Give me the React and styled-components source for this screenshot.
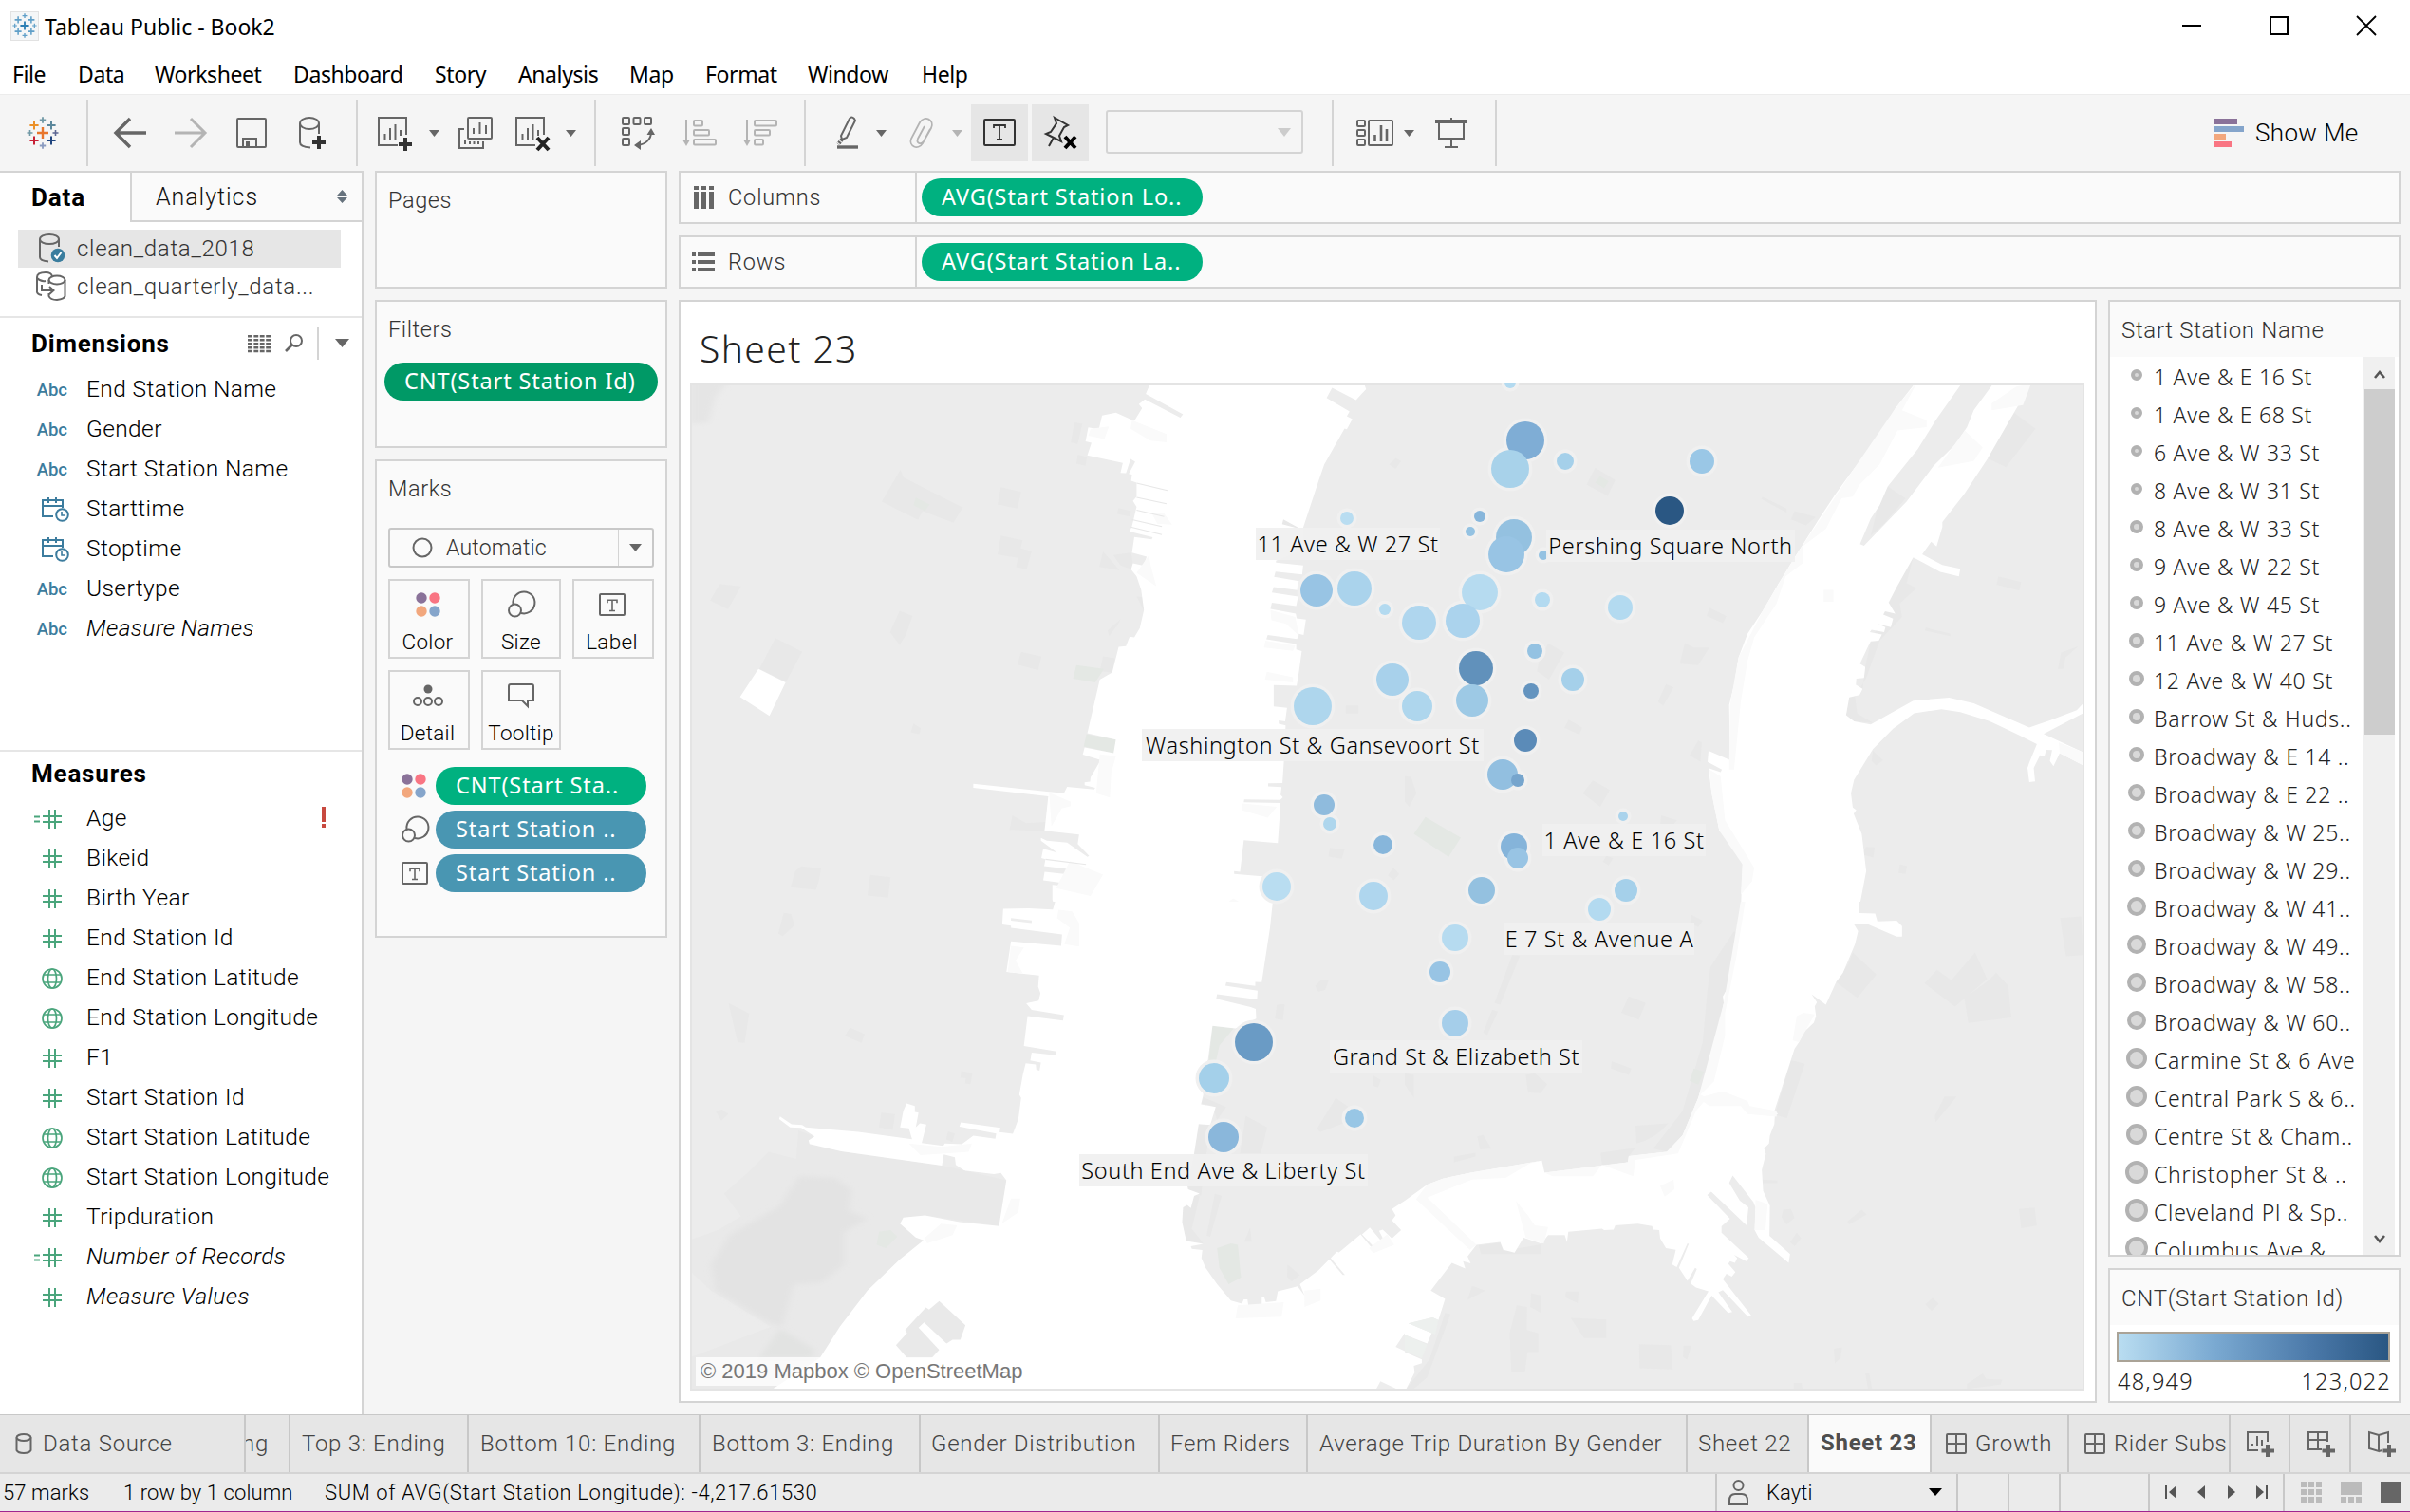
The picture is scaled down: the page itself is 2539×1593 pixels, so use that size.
import React from "react";
import styled, { createGlobalStyle, css } from "styled-components";

const ui = `Roboto, "Noto Sans", sans-serif`;
const humanist = `"Noto Sans", "Open Sans", sans-serif`;
const line = "#d4d4d4";
const ink = "#666";

const Global = createGlobalStyle`
  *, *::before, *::after { box-sizing: border-box; }
  html, body { margin: 0; padding: 0; overflow: hidden; }
  body { background: #f5f5f5; font-family: ${ui}; font-weight: 350; color: #000; }
  svg { display: block; flex: none; }
`;

/* ---------- frame ---------- */
const Window = styled.div`
  width: 2539px; height: 1593px; display: flex; flex-direction: column; overflow: hidden;
  background: #f5f5f5; white-space: nowrap; border-bottom: 1px solid #a0248f;
`;
const TitleBar = styled.header`
  height: 56px; flex: none; background: #fff; display: flex; align-items: center; padding: 0 36px 0 11px;
  font: 23px ${humanist}; letter-spacing: 0;
`;
const TitleIcon = styled.span`
  width: 30px; height: 31px; margin-right: 6px; margin-top: -2px; background: #f4f6f7; border: 1px solid #e2e2e2;
  display: flex; align-items: center; justify-content: center;
`;
const WindowButtons = styled.div`
  margin-left: auto; display: flex; align-items: center; gap: 72px; margin-top: -2px;
`;
const MenuBar = styled.nav`
  height: 43px; flex: none; background: #fff; display: flex; align-items: center; padding: 0 0 0 13px;
  font: 23px ${humanist}; letter-spacing: -0.4px;
`;
const MenuItem = styled.span`width: ${p => p.$w}px; flex: none;`;

/* ---------- toolbar ---------- */
const Toolbar = styled.div`
  height: 81px; flex: none; border-top: 1px solid #ececec; display: flex; align-items: center;
`;
const Tool = styled.span`
  width: ${p => p.$w}px; margin-left: ${p => p.$ml || 0}px; height: 60px; flex: none;
  display: flex; align-items: center; justify-content: center;
  background: ${p => (p.$on ? "#e6e6e6" : "transparent")};
`;
const ToolRule = styled.i`width: 2px; height: 70px; margin-left: ${p => p.$ml}px; flex: none; background: ${line};`;
const FitBox = styled.span`
  width: 208px; height: 46px; margin-left: 18px; border: 2px solid ${line}; border-radius: 3px; background: #f5f5f5;
  display: flex; align-items: center; justify-content: flex-end; padding-right: 11px; margin-top: -2px; flex: none;
`;
const ShowMe = styled.span`
  margin-left: 755px; display: flex; align-items: center; gap: 12px; font-size: 26px; letter-spacing: 0.35px;
`;

/* ---------- body ---------- */
const Body = styled.main`height: 1310px; flex: none; display: flex;`;
const Side = styled.aside`
  width: 383px; flex: none; background: #fff; border-right: 2px solid ${line}; display: flex; flex-direction: column;
`;
const SideTabs = styled.div`height: 54px; flex: none; display: flex; border-top: 2px solid ${line};`;
const SideTab = styled.div`
  display: flex; align-items: center; font-size: 25px;
  ${p => p.$on
    ? css`width: 137px; padding-left: 33px; font-weight: 700; font-size: 26px; letter-spacing: 0.9px;`
    : css`flex: 1; padding: 0 15px 0 25px; justify-content: space-between; background: #fafafa; border-left: 2px solid ${line}; border-bottom: 2px solid ${line}; color: #111; letter-spacing: .95px;`}
`;
const Sources = styled.div`padding: 8px 22px 0 19px; height: 99px; flex: none;`;
const Source = styled.div`
  height: 40px; display: flex; align-items: center; padding-left: 20px; gap: 12px; font-size: 24px;
  color: #333; background: ${p => (p.$on ? "#e6e6e6" : "none")}; letter-spacing: 0.7px;
`;
const Section = styled.section`height: ${p => p.$h}px; flex: none; border-top: 2px solid #e6e6e6; overflow: hidden;`;
const SectionHead = styled.div`
  height: ${p => p.$h}px; display: flex; align-items: center; padding: 0 13px ${p => p.$pb || 0}px 33px; font-size: 26px; font-weight: 700; letter-spacing: 0.8px;
`;
const HeadTools = styled.span`margin-left: auto; display: flex; align-items: center; gap: 15px;`;
const HeadRule = styled.i`width: 2px; height: 35px; background: ${line}; margin-right: 2px;`;
const Field = styled.div`
  height: 42px; display: flex; align-items: center; font-size: 24.5px; letter-spacing: 0.4px;
  font-style: ${p => (p.$it ? "italic" : "normal")};
`;
const FieldIcon = styled.span`
  width: 91px; flex: none; display: flex; justify-content: flex-end; padding-right: ${p => p.$pr}px; margin-top: 3px;
  font: 500 18.5px ${ui}; color: #3c7c9e; letter-spacing: 0;
`;
const Alert = styled.b`margin-left: auto; margin-right: 38px; width: 4px; display: flex; flex-direction: column; gap: 2px;
  &::before { content: ""; height: 16px; background: #c8493f; }
  &::after { content: ""; height: 4px; background: #c8493f; }
`;

const Cards = styled.div`width: 308px; margin-left: 12px; flex: none; display: flex; flex-direction: column; gap: 12px;`;
const Card = styled.div`
  height: ${p => p.$h}px; flex: none; border: 2px solid ${line}; background: #fafafa; overflow: hidden;
`;
const CardTitle = styled.div`
  font-size: 23.5px; line-height: 28px; padding: 15px 12px 0; color: #333; letter-spacing: 0.6px;
`;
const FilterSlot = styled.div`padding: 21px 0 0 8px;`;
const Pill = styled.div`
  width: ${p => p.$w}px; height: 40px; border-radius: 20px; background: ${p => p.$c}; color: #fff;
  font: 400 23.5px/39px ${humanist}; padding-left: 21px; flex: none; letter-spacing: 0.88px;
`;
const MarkType = styled.div`
  margin: 27px 12px 0; height: 42px; border: 2px solid #c8c8c8; border-radius: 3px; background: #fafafa; color: #333;
  display: flex; align-items: center; font-size: 23px; padding-left: 23px; gap: 14px; letter-spacing: 0.2px;
`;
const MarkCaret = styled.span`
  margin-left: auto; width: 36px; height: 38px; border-left: 1px solid ${line}; display: flex; align-items: center; justify-content: center;
`;
const MarkGrid = styled.div`
  margin: 12px 12px 0; display: grid; grid-template-columns: 86px 84px 86px; column-gap: 12px; row-gap: 12px;
`;
const MarkButton = styled.div`
  height: 84px; border: 2px solid ${line}; display: flex; flex-direction: column; align-items: center; font-size: 22.5px; line-height: 28px;
  padding-right: ${p => p.$pr || 0}px; letter-spacing: 0.3px;
`;
const MarkGlyph = styled.span`height: 50px; display: flex; align-items: center; justify-content: center;`;
const MarkRow = styled.div`
  display: flex; align-items: center; height: 46px; padding-left: 26px;
  > span { width: 36px; }
`;
const MarkRows = styled.div`margin-top: 15px;`;

const Right = styled.div`width: 1814px; margin-left: 12px; display: flex; flex-direction: column; gap: 12px;`;
const Shelf = styled.div`height: 56px; flex: none; border: 2px solid ${line}; background: #fafafa; display: flex; align-items: center;`;
const ShelfName = styled.div`
  width: 249px; height: 52px; border-right: 2px solid ${line}; margin-right: 5px; padding-left: ${p => p.$pl}px; display: flex;
  align-items: center; gap: ${p => p.$gap}px; font-size: 23.5px; color: #333; letter-spacing: 0.85px;
`;
const Stage = styled.div`display: flex; gap: 12px;`;
const View = styled.div`
  width: 1494px; height: 1162px; border: 2px solid ${line}; background: #fff; padding: 0 11px 11px 10px;
`;
const SheetTitle = styled.h1`
  margin: 0; height: 86px; padding: 8px 0 0 10px; font: 300 39px/82px ${humanist}; color: #222; letter-spacing: 1.4px;
`;
const MapCanvas = styled.div`position: relative; width: 1469px; height: 1061px; background: #ececec; overflow: hidden;`;
const MapLabel = styled.span`
  position: absolute; left: ${p => p.$x - 727}px; top: ${p => p.$y - 404}px; width: ${p => p.$w}px; height: 34px; text-align: center;
  font: 300 23.5px/34px ${humanist}; color: #000; background: rgba(240,240,240,.93); letter-spacing: 0.62px;
`;
const Credit = styled.span`
  position: absolute; left: 6px; bottom: 5px; height: 30px; padding: 0 4px 0 5px; background: rgba(255,255,255,.75);
  font: 22px/30px "Liberation Sans", Arial, sans-serif; color: #777;
`;
const Legends = styled.div`width: 308px; display: flex; flex-direction: column; gap: 12px;`;
const Legend = styled.div`height: ${p => p.$h}px; border: 2px solid ${line}; background: #fff; overflow: hidden;`;
const LegendHead = styled.div`
  height: 58px; background: #fafafa; padding-left: 12px; font-size: 24px; line-height: 60px; color: #333; letter-spacing: 0.7px;
`;
const LegendBody = styled.div`display: flex; height: 946px;`;
const LegendList = styled.div`flex: 1; overflow: hidden; padding-top: 1px;`;
const LegendRow = styled.div`
  height: 40.03px; display: flex; align-items: center; font: 300 23px ${humanist}; color: #222; letter-spacing: 0.72px;
`;
const Dot = styled.i`
  width: ${p => p.$r * 2}px; height: ${p => p.$r * 2}px; margin-left: ${p => 28 - p.$r}px; margin-right: ${p => 18 - p.$r}px; margin-top: -4px;
  border-radius: 50%; background: #d9d9d9; border: 4px solid #b2b2b2; flex: none;
`;
const Scroll = styled.div`
  width: 33px; margin-right: 4px; background: #f0f0f0; display: flex; flex-direction: column; align-items: center; flex: none;
  svg:last-child { margin-top: auto; }
`;
const Thumb = styled.i`width: 32px; height: 364px; background: #cdcdcd;`;
const Ramp = styled.div`
  margin: 7px 9px 0 7px; height: 32px; border: 2px solid #aaa397;
  background: linear-gradient(90deg, #b9ddf1, #7baad2 35%, #4a78a8 72%, #2a5783);
`;
const RampEnds = styled.div`
  display: flex; justify-content: space-between; padding: 0 8px 0 8px; font: 300 23.5px/41px ${humanist}; color: #222; letter-spacing: 1.25px;
`;

/* ---------- bottom ---------- */
const SheetTabs = styled.div`
  height: 61px; flex: none; background: #e6e6e6; border-top: 1px solid #c8c8c8; display: flex; font-size: 24px; color: #444;
`;
const SheetTab = styled.div`
  width: ${p => p.$w}px; flex: none; border-right: 2px solid #c8c8c8; padding-left: ${p => p.$pl ?? 12}px; display: flex; align-items: center;
  gap: ${p => p.$gap ?? 10}px; overflow: hidden; letter-spacing: ${p => p.$ls ?? 0.73}px; height: 60px;
  ${p => p.$on && css`background: #fafafa; font-weight: 700; color: #4e4e4e; padding-bottom: 3px;`}
  ${p => p.$end && css`justify-content: flex-end; padding-right: 21px; padding-left: 0;`}
  ${p => p.$mid && css`justify-content: center; padding-left: 2px;`}
`;
const Status = styled.footer`
  height: 42px; flex: none; border-top: 2px solid ${line}; background: #ebebeb; display: flex; align-items: center; font-size: 22px;
`;
const StatusCell = styled.div`
  width: ${p => p.$w}px; height: 40px; flex: none; padding: 0 ${p => p.$pr || 0}px 2px ${p => p.$pl || 0}px; display: flex; align-items: center;
  border-right: ${p => (p.$rule ? 2 : 0)}px solid #c8c8c8; gap: ${p => p.$gap || 0}px; letter-spacing: ${p => p.$ls ?? 0.1}px;
`;
const Push = styled.span`margin-left: auto;`;

/* ---------- icons ---------- */
const Svg = ({ w, h, children, s = ink, sw = 2 }) => (
  <svg width={w} height={h} viewBox={`0 0 ${w} ${h}`} fill="none" stroke={s} strokeWidth={sw} overflow="visible">{children}</svg>
);
const Caret = ({ c = ink, w = 12, h = 8 }) => (
  <Svg w={w} h={h} s="none"><path d={`M0 0H${w}L${w / 2} ${h}Z`} fill={c} /></Svg>
);
const plus = (x, y, r) => `M${x - r} ${y}H${x + r}M${x} ${y - r}V${y + r}`;
const Logo = ({ size = 34, mono }) => {
  const parts = [
    [17, 17, 6, "#e8762c", 2.4], [8, 9, 4.6, "#eb9129", 2], [26, 9, 4.6, "#5b879b", 2], [8, 25, 4.6, "#c72035", 2],
    [26, 25, 4.6, "#1f447e", 2], [17, 3.5, 3.2, "#7199a6", 1.8], [17, 30.5, 3.2, "#8a9bc0", 1.8], [3.5, 17, 3, "#7199a6", 1.6], [30.5, 17, 3, "#5c6692", 1.6],
  ];
  return (
    <svg width={size} height={size} viewBox="0 0 34 34" fill="none">
      {parts.map(([x, y, r, c, w], i) => <path key={i} d={plus(x, y, r)} stroke={mono ? (i === 0 ? "#2d7fb4" : "#5f9fc8") : c} strokeWidth={w} />)}
    </svg>
  );
};
const Sheet = ({ mark }) => (
  <Svg w={38} h={38}>
    <path d="M22 32H2V3H31V21" /><path d="M8.500 27V20M14 27V14M19.500 27V10M25 22V16" />
    {mark === "plus" ? <path d="M30 24V38M23 31H37" stroke="#333" strokeWidth="4" /> : <path d="M24 24L36 37M36 24L24 37" stroke="#222" strokeWidth="4" />}
  </Svg>
);
const SortIcon = ({ desc }) => (
  <Svg w={36} h={30} s="#b4b4b4">
    <path d="M4 1V26" /><path d="M0 22H8L4 29Z" fill="#b4b4b4" stroke="none" />
    {desc
      ? <><rect x="12" y="2" width="23" height="5.500" rx="1" /><rect x="12" y="12" width="16" height="5.500" rx="1" /><rect x="12" y="22" width="9" height="5.500" rx="1" /></>
      : <><rect x="12" y="2" width="9" height="5.500" rx="1" /><rect x="12" y="12" width="16" height="5.500" rx="1" /><rect x="12" y="22" width="23" height="5.500" rx="1" /></>}
  </Svg>
);
const BoxT = ({ w = 28 }) => (
  <Svg w={w} h={w - 4}>
    <rect x="1" y="1" width={w - 2} height={w - 6} rx="1" />
    <path d={`M${w / 2 - 5} ${w * .26 + 3}V${w * .26}H${w / 2 + 5}V${w * .26 + 3}M${w / 2} ${w * .26}V${w * .66}M${w / 2 - 3} ${w * .66}H${w / 2 + 3}`} strokeWidth="1.600" />
  </Svg>
);
const Four = () => (
  <Svg w={26} h={26} s="none">
    <circle cx="6" cy="6" r="5.700" fill="#8a7299" /><circle cx="20" cy="6" r="5.700" fill="#f97583" />
    <circle cx="6" cy="20" r="5.700" fill="#f2a77d" /><circle cx="20" cy="20" r="5.700" fill="#85a5cb" />
  </Svg>
);
const SizeIcon = () => (
  <Svg w={28} h={28}><path d="M5.500 13A11.500 11.500 0 1 1 14 23" /><circle cx="7.500" cy="20" r="6.500" /></Svg>
);
const Hash = ({ eq }) => (
  <Svg w={eq ? 29 : 20} h={20} s="#4aa57c">
    <g transform={`translate(${eq ? 9 : 0} 0)`}><path d="M0 7H20M0 13H20M7 0V20M13 0V20" /></g>
    {eq && <path d="M0 7.500H6M0 12.500H6" />}
  </Svg>
);
const Globe = () => (
  <Svg w={22} h={22} s="#4aa57c" sw={1.7}>
    <circle cx="11" cy="11" r="10" /><ellipse cx="11" cy="11" rx="4.500" ry="10" /><path d="M2 7H20M2 15H20" />
  </Svg>
);
const Calendar = () => (
  <Svg w={29} h={26} s="#3c7c9e">
    <path d="M12 20H1V3H22V11M1 9H22M7 0V6M15 0V6" /><circle cx="21.500" cy="18.500" r="6.300" /><path d="M21 15V19H25" strokeWidth="1.600" />
  </Svg>
);
const GridIcon = () => <Svg w={22} h={22}><rect x="1" y="1" width="20" height="20" rx="1" /><path d="M11 1V21M1 11H21" /></Svg>;

/* ---------- map ---------- */
const water = {
  nw: "M1018 0L1005 42L1086 102L1080 112L1003 58L990 72L997 84L980 122L940 97L910 106L903 146L880 141L874 182L887 186L878 223L955 246L950 275L962 276L972 234L982 242L968 278L975 280L973 298L985 304L985 345L977 358L985 375L975 432L970 448L1020 465L1018 471L980 464L975 510L1007 522L1000 549L977 542L973 560L985 580L995 620L1001 680L992 733L980 760L970 758L962 786L946 788L932 864L905 885L878 1043L940 1062L935 1102L872 1085L868 1106L907 1122L885 1173L884 1186L872 1188L872 1196L895 1204L893 1209L834 1201L827 1220L790 1215L630 1192L630 1204L793 1229L785 1331L860 1342L857 1370L882 1405L878 1408L834 1366L790 1360L777 1352L777 1360L812 1395L782 1384L778 1411L787 1415L784 1435L895 1453L893 1468L785 1452L782 1477L880 1495L878 1500L802 1490L802 1535L808 1555L805 1568H1280L1281 1545L1258 1465L1197 1458V1450L1210 1452L1218 1359L1292 1367L1298 1249L1218 1247L1219 1238L1297 1240L1303 1232L1298 1225L1300 1202L1271 1200V1191L1302 1190L1305 1130L1309 1020L1294 1015V1005L1308 1008L1312 968L1283 964V901L1333 903L1338 860L1344 801L1332 796V780L1267 766L1270 753L1334 765L1337 750L1348 753L1353 708L1333 704L1331 690L1276 676L1279 658L1332 668L1336 640L1279 628L1283 612L1335 621L1338 594L1284 582L1287 566L1345 575L1347 548L1288 540V534L1347 500L1347 437L1381 297L1393 250L1437 144L1442 146L1454 116L1442 108L1448 94L1398 54L1410 24L1462 60L1474 42L1484 28L1476 0ZM163 853L222 893L187 992L123 936Z",
  sw: "M808 0L803 24L750 20L695 22L693 70L712 73V80L823 100L821 135L712 121L702 215L773 226L771 260L776 280L772 303L745 311L757 331L827 347L825 364L748 350L740 441L811 458L809 470L757 462L754 486L777 492L774 517L767 514L766 498L744 494L738 528L730 590L734 600L728 665L722 688L716 710L687 705L689 692L603 675L600 688L680 709L678 725L630 716L605 742L568 740L565 747L518 738L528 682L514 678L505 690L511 645L503 643V625L485 617L478 640L471 690L490 693L497 727L380 704L266 690L258 683L235 681L210 657L208 665L232 690L256 692L285 718L272 730L274 741L343 764L562 807L566 773L590 782L592 805L610 822L675 833L690 830L702 852L686 992L600 980L525 960L478 966L471 985L505 1027L522 1036L470 1095L400 1190L340 1300L297 1395L190 1495H1568V915L1540 940L1548 960L1540 975L1560 1005L1540 1030L1520 1003L1512 1007L1524 1040L1519 1042L1492 997L1475 1018L1505 1062L1500 1066L1472 1018L1425 1073L1420 1071L1407 1090L1438 1142L1433 1142L1404 1094L1380 1128L1340 1170L1350 1205L1335 1177L1292 1192L1288 1222L1266 1225L1262 1208H1257V1235L1228 1237L1226 1217H1218L1214 1230L1190 1220L1160 1170L1135 1120L1126 1090L1128 1066L1105 1062L1103 1054L1130 1047L1093 1038L1084 980L1086 935L1095 928L1103 937L1110 900L1122 893L1097 880L1095 870L1110 770L1120 680L1145 683L1157 628L1125 620L1130 590L1125 520L1140 485L1150 380L1200 388L1245 358L1244 328L1233 322L1158 297L1160 283L1247 299L1248 272L1178 257L1180 246L1243 258V245L1257 246L1275 80L1281 0Z",
  ne: "M1145 0L1095 85L1050 190L1005 258L960 340L925 410L870 525L835 600L800 680L765 750L745 820L735 900L724 960L726 1122L678 1095L676 1128L708 1150L705 1158L678 1146L685 1220L702 1330L745 1390L754 1430L750 1568H1013L1030 1450L1020 1340L1002 1280L1008 1270L1000 1262L996 1220L1003 1180L1045 1090L1090 1030L1137 984L1198 972L1240 981L1305 1007L1370 1048L1411 1075L1394 1130L1390 1145L1394 1187L1407 1185L1404 1145L1418 1108L1428 1110L1432 1092L1445 1093L1440 1125L1448 1140L1462 1102L1513 1137V1098L1426 1045L1513 985V957L1500 975L1440 1005L1394 1026L1270 955L1215 938L1135 947L1040 1017L1003 1008L985 990L992 937L1015 930L1022 912L1007 900L1008 882L1025 880L1028 848L1016 838L1035 785L1040 772L1058 770L1065 752L1038 745L1042 738L1070 745L1073 730L1055 720L1085 730L1090 705L1068 693L1072 683L1095 690L1080 657L1098 612L1135 524L1195 567L1237 580L1240 558L1200 547L1155 515L1175 478L1187 492L1200 435V420L1250 335L1300 235L1350 120L1403 0H1320L1270 90L1255 140L1230 190L1180 255L1120 360L1025 490L1016 485L1040 410L1060 370L1078 315L1145 205L1185 120L1249 0Z",
  se: "M750 0L745 100L718 270L710 290L712 310L700 390L690 450L655 600L620 715L585 765L500 778L498 797L312 829L306 792L150 828L85 847L50 865L0 915V1325L50 1352L60 1320L8 1290L62 1272L75 1280L90 1215L58 1190L105 1105L135 1122L130 1100L147 1106L140 1085L160 1050L213 1041L220 1065L245 1074L265 1028L305 1046L320 1020H357L362 1042L365 1010L440 1000L445 1005L466 1003L470 990L520 985L552 992L555 1003L568 1005L570 1030L583 1060L605 1065L597 1110L607 1118L631 1045L634 1047L612 1120L631 1160L648 1120L652 1124L638 1168L650 1180L678 1192L641 1275L645 1283L655 1280L685 1205L722 1258L731 1255L700 1195L710 1188L766 1270L773 1265L710 1155L718 1138L730 1147L738 1133L722 1108L726 1100L737 1105L742 1090L735 1080L762 1100L768 1090L707 1013V993L726 970L675 897L684 887L763 990L767 935L748 915L724 860L732 838L778 918L783 935L781 1005L790 1028L857 1105L860 1078L814 1022L815 930L800 885L797 820L806 772L802 755L813 740L815 715L825 680L826 655L833 648L825 640L870 450L880 430L890 400L913 370L918 350L915 320L920 308L908 283L940 315L963 245L978 218L1005 130L1012 90L1003 70L1035 70L1098 107H1110V75L1098 58L1055 60L1050 36L1015 35V0ZM0 1378L38 1400V1412L20 1420L22 1440L3 1490H0Z",
};
const parks = {
  nw: "M472 265L478 288L607 377L587 422L520 388L510 414L431 360ZM690 317L734 331L726 380L683 368ZM690 460L737 474L733 498L757 506L746 559L723 553L727 526L683 516ZM79 603L125 610L97 677L58 652ZM470 682L498 697L484 752L470 783L449 745ZM200 762L258 803L223 892L165 853ZM734 803L778 817L771 857L726 841ZM850 126L867 130L857 190L842 185ZM857 221L877 228L874 254L854 248ZM912 507L948 562L904 552ZM934 517L973 510L977 542L975 560L950 548ZM950 707L945 722L925 757L922 740ZM912 816L938 822L932 864L905 860ZM500 1014L516 1028L513 1046L494 1040ZM715 1285L745 1308L787 1305L784 1332L709 1328ZM256 1436L299 1442L295 1475L288 1505L233 1497L243 1450ZM406 1461L450 1468L445 1528L400 1522ZM1440 961H1467V985H1440ZM1405 1381L1437 1387L1431 1413L1402 1407ZM1543 1440L1556 1458L1544 1477L1531 1462ZM1548 232L1560 240L1548 263L1534 250ZM945 379L973 388L970 404L943 396ZM985 640L1000 642V680Z",
  sw: "M218 34L234 38L242 72L216 105L206 98ZM98 310L143 342L133 432L118 430L112 395ZM362 385L394 405L387 432L351 410ZM604 518L628 524L624 558L612 556L614 540L602 538ZM430 645L460 650L455 698L425 690ZM70 640L84 636L98 650L82 670ZM1290 315L1307 313L1303 362L1286 358ZM1385 240L1403 238L1395 270L1380 275L1373 258ZM1418 600L1458 640L1440 675L1384 705L1377 695ZM1222 655L1269 690L1255 770H1210ZM1500 532L1516 545L1510 568L1498 563ZM1155 893L1170 900L1145 1025L1137 1022ZM1313 1110L1340 1142L1322 1162L1312 1148ZM1232 997L1235 1040L1219 1040ZM575 703L590 710L584 735L571 727ZM1130 598L1180 628L1160 668L1150 625L1125 617ZM1120 680L1145 683L1125 900L1097 880ZM1100 890L1122 900L1105 1000L1130 1045L1093 1038L1084 980L1086 935Z",
  ne: "M425 260L470 296L453 343L406 310ZM320 778L356 805L322 885L295 860L300 830ZM680 673L718 697L710 718L674 697ZM625 777L645 790L680 790L655 842L614 838ZM583 898L600 908L577 962L565 950ZM366 1003L396 1026L390 1047L356 1027ZM420 1182L458 1210L436 1260L397 1220ZM655 1065L663 1070L660 1127L636 1108ZM798 345L852 380V392L796 352ZM870 388L918 405L895 430L862 412ZM1360 97L1408 145L1342 258L1300 232ZM1325 580L1376 597L1372 622L1321 605ZM1163 731L1218 750V757L1161 740ZM1465 805L1503 787L1475 820L1470 853H1458ZM1045 1095L1068 1123L1052 1138L1042 1125ZM1105 1430L1121 1434L1118 1458L1102 1455ZM1030 1378L1049 1380L1046 1410L1020 1400ZM1078 315L1118 350L1070 425L1040 460L1055 380ZM572 1285L608 1300L600 1312H570ZM450 1405L465 1412L455 1433L442 1422ZM1135 524L1120 600L1142 615L1105 660L1110 700L1060 770L1030 880L1005 935L1010 985L1045 1012L1003 1008L985 990L992 937L1022 912L1028 848L1040 772L1098 612ZM0 1170L14 1172L26 1220L10 1260L0 1245Z",
  se: "M500 290L538 310L522 361L483 340ZM462 488L506 510L500 530L460 510ZM175 713L193 755L168 758L162 718ZM110 780L158 768V780L110 797ZM437 768L515 753L500 778V797L440 805ZM515 685L588 678Q560 725 517 740ZM240 163L257 165L213 315L200 310ZM195 330L208 336L184 408L175 400ZM1273 155L1300 237L1228 321L1160 250L1188 208L1220 240ZM1320 217L1347 257L1354 354L1258 371L1249 295L1304 240ZM1463 50L1510 45L1514 163L1476 167ZM1000 155L1053 223L1010 294L962 245L990 190ZM862 485L893 496L853 662L826 652ZM1205 596H1232L1185 675L1183 655ZM1371 940L1406 936L1411 991L1376 999ZM845 942L862 940L870 968L852 987L841 965ZM1020 942L1031 957L992 987L988 978ZM875 1012L885 1030L870 1054L860 1042ZM1178 1212L1192 1230L1176 1252L1162 1232ZM250 1235L273 1240L272 1310L298 1320V1378H274L268 1440H238L234 1320ZM282 1198L303 1204V1257L280 1240ZM360 1193H388L386 1228L358 1210ZM370 1273L450 1278V1335H400ZM523 1354L594 1357L598 1431L524 1427ZM622 1358H640L630 1402L621 1392ZM958 1368L976 1363L973 1395L960 1413ZM1290 1443L1298 1460L1334 1462L1330 1477L1255 1490V1475ZM1028 1443H1037L1043 1490H1034ZM868 1472H886L888 1490H868ZM150 1175L180 1190L140 1218ZM90 1258L102 1262L50 1455L20 1490H3L55 1400ZM270 530L290 525L318 558L303 586L275 584ZM0 525L20 530V600L0 560ZM640 40L665 58L655 78L637 65ZM797 850L832 853V861H797ZM735 90L745 100L718 270L700 390L655 600L620 715L585 765L555 755L620 640L665 430L675 280L682 200ZM165 1052L213 1043L220 1068L305 1048V1078H170Z",
};
const greens = {
  nw: "M505 348L535 368L525 388L500 370ZM854 842L914 853L895 893L847 882ZM876 1046L940 1062L935 1102L870 1082Z",
  sw: "M1150 380L1196 388L1165 440L1158 485H1142ZM425 1010L450 1005L465 1025L440 1060L420 1050ZM1160 1060L1190 1045L1205 1050L1212 1150L1185 1170L1165 1120Z",
  ne: "M436 284L455 300L445 320L425 304ZM46 1290L125 1351L98 1408L20 1340Z",
  se: "M645 510L668 520L655 560L636 548Z",
};
const shoal = {
  nw: "M975 120L1050 160V185L1015 180L972 145ZM885 145L925 138L915 175L880 165ZM1018 395L1045 395L1062 428L1030 425ZM1012 518L1016 550L1028 610L985 570ZM1276 680L1330 700L1338 755L1310 720L1278 710ZM1265 770L1330 785L1325 800L1262 790ZM1268 862L1325 878V893L1264 885ZM905 1105L940 1110L930 1160L927 1233L897 1220ZM795 1218L842 1245V1258L822 1265L800 1318ZM1215 1250L1290 1260L1270 1292L1213 1270ZM840 1420L912 1460L885 1523L810 1500ZM1180 1545L1195 1530L1220 1550V1568H1180Z",
  sw: "M815 25L845 30L860 65V137L828 130L840 80L812 50ZM712 135L740 140L722 180L738 220L705 215ZM490 740L560 750L627 740L620 765L515 775ZM712 908H732L728 950L692 985ZM523 1030L560 985L595 990L585 1020L530 1045ZM1205 1235L1305 1225L1300 1270L1200 1275ZM1350 1190L1385 1185V1220L1350 1240ZM1530 1018L1545 1050L1500 1075L1490 1060Z",
  ne: "M1145 5L1110 90L1165 120V140L1100 150L1060 250L1015 310L1000 345L975 350L940 440L890 490V540L850 580L830 660L780 760L765 830L750 950L735 1150H724L726 960L745 820L800 680L870 525L1005 258L1095 85ZM1310 70L1365 20L1398 12L1380 75L1310 90ZM1250 150L1290 200L1270 240L1190 260ZM935 620H957V655H935ZM680 1150L705 1170L715 1300L780 1440L775 1480L750 1520L754 1430L702 1330L685 1220ZM1460 1070L1513 1098V1137L1462 1102Z",
  se: "M750 0H760L740 170L715 340V410L690 550L660 590L675 600L650 640L610 770L515 790L510 840L440 805L420 840H330L312 829L498 797L500 778L585 765L620 715L655 600L712 310ZM655 600L710 580L765 610L770 625L830 640V658L765 650L750 625L680 625ZM150 828L220 812L306 792L280 800L225 845H220L150 850L50 905L160 1050L145 1065L25 910L50 865L85 847ZM248 915L275 960L290 990L320 995L310 1046L270 1028ZM570 870L600 850L602 880L580 902ZM875 350L890 340L915 345L880 430L866 425ZM783 912L810 925L805 1005H781Z",
};
const tiles = [["nw", 720, 400, 760, 560], ["ne", 1480, 400, 740, 560], ["sw", 720, 950, 760, 540], ["se", 1480, 950, 740, 540]];
const Tile = ({ id, x, y, w, h }) => (
  <svg x={x} y={y} width={w} height={h} viewBox="0 0 1568 1568" preserveAspectRatio="none" overflow="hidden">
    <rect width="1568" height="1568" fill="#ececec" />
    {id === "nw" && <path d="M14 0H100L70 50L55 125L14 130Z" fill="#e5e5e5" filter="url(#soft)" />}
    {id === "sw" && <>
      <path d="M14 1035L75 1005L125 962L88 893L140 828L185 765L245 787L250 700L285 718L274 741L343 764L562 807L610 822L702 852L686 992L525 960L471 985L522 1036L400 1190L297 1395L190 1495H14V1395L190 1300L60 1190L14 1130Z" fill="#e9e9e9" />
      <path d="M250 840L330 845L365 880L360 945L400 970L350 1010V1110L300 1165L240 1170L215 1300L190 1290L70 1190L60 1110L100 1020L210 930Z" fill="#e3e3e3" filter="url(#soft)" />
      <path d="M210 1305L285 1370L280 1395H165L190 1345Z" fill="#e2e3e2" filter="url(#soft)" />
    </>}
    <path d={parks[id]} fill="#e8e8e8" />
    <path d={greens[id]} fill="#e4e8e4" />
    <path d={water[id]} fill="#fff" />
    <path d={shoal[id]} fill="#fafafa" />
    {id === "nw" && <path d="M985 305L1052 327M985 347L1050 366M985 385L1045 404M975 413L1040 433M972 435L1040 457M787 1415L875 1430M1305 415L1335 437L1303 425Z" stroke="#e8e8e8" strokeWidth="3" fill="#e8e8e8" />}
    {id === "sw" && <>
      <path d="M556 1222L613 1296L602 1340H585L572 1352L523 1287L511 1303L556 1371L540 1395H486L462 1357L486 1320L482 1310L527 1241L534 1248Z" fill="#e9e9e9" />
      <path d="M712 50L757 57V65L712 58ZM1568 1320L1548 1362L1568 1375ZM1515 1467L1550 1490H1506Z" fill="#ededed" />
    </>}
    {id === "se" && <path d="M8 1290L62 1272L75 1280L68 1324ZM0 1325L50 1355L38 1397L0 1375Z" fill="#edf0ee" />}
  </svg>
);
const stations = [
  [1419, 546, 7, "#b9ddf1"], [1387, 622, 17, "#98c4e4"], [1427, 620, 18, "#aad3ec"], [1459, 642, 6, "#b3daf0"], [1467, 716, 17, "#a8d1eb"],
  [1383, 744, 20, "#aed6ed"], [1395, 848, 11, "#8fbbdd"], [1401, 868, 7, "#aed6ed"], [1457, 890, 10, "#87b6db"], [1345, 934, 15, "#b9ddf1"],
  [1447, 944, 15, "#afd6ee"], [1591, 403, 6, "#b3daf0"], [1607, 464, 20, "#7fadd5"], [1591, 494, 20, "#a8d2ea"], [1649, 486, 9, "#a5d0ea"],
  [1793, 486, 13, "#9ac7e6"], [1759, 538, 15, "#2a5783"], [1559, 544, 6, "#87b6db"], [1549, 560, 5, "#94c2e2"], [1595, 566, 19, "#94c1e0"],
  [1587, 584, 19, "#98c4e4"], [1626, 585, 5, "#94c2e2"], [1559, 624, 19, "#b6dbf0"], [1625, 632, 8, "#b3daf0"], [1495, 656, 18, "#afd6ee"],
  [1541, 654, 18, "#abd3ed"], [1707, 640, 13, "#b3daf0"], [1617, 686, 8, "#94c2e2"], [1555, 704, 18, "#6191bb"], [1657, 716, 12, "#a5d0ea"],
  [1613, 728, 8, "#6494bf"], [1551, 738, 17, "#9dc9e5"], [1493, 744, 16, "#aed6ed"], [1607, 780, 12, "#5b8bb8"], [1583, 816, 16, "#92bfe0"],
  [1599, 822, 7, "#76a5cd"], [1710, 860, 5, "#aad3ec"], [1595, 892, 14, "#85b4da"], [1599, 904, 11, "#98c4e4"], [1561, 938, 14, "#94c1e0"],
  [1713, 938, 12, "#a5d0ea"], [1685, 958, 12, "#b3daf0"], [1533, 988, 14, "#b6dbf0"], [1517, 1024, 11, "#98c4e4"], [1533, 1078, 14, "#a5ceea"],
  [1321, 1098, 20, "#6a9bc5"], [1279, 1136, 16, "#a4d0ea"], [1289, 1198, 16, "#8ab7db"], [1427, 1178, 10, "#98c6e5"],
];
const mapLabels = [
  ["11 Ave & W 27 St", 1323, 556, 194], ["Pershing Square North", 1629, 558, 262], ["Washington St & Gansevoort St", 1203, 768, 360],
  ["1 Ave & E 16 St", 1625, 868, 172], ["E 7 St & Avenue A", 1585, 972, 200], ["Grand St & Elizabeth St", 1401, 1096, 266], ["South End Ave & Liberty St", 1137, 1216, 304],
];

/* ---------- data ---------- */
const menus = [["File", 69], ["Data", 81], ["Worksheet", 146], ["Dashboard", 149], ["Story", 88], ["Analysis", 117], ["Map", 80], ["Format", 108], ["Window", 120], ["Help", 80]];
const dimensions = [["End Station Name", "abc"], ["Gender", "abc"], ["Start Station Name", "abc"], ["Starttime", "cal"], ["Stoptime", "cal"], ["Usertype", "abc"], ["Measure Names", "abc", 1]];
const measures = [["Age", "eq"], ["Bikeid", "hash"], ["Birth Year", "hash"], ["End Station Id", "hash"], ["End Station Latitude", "geo"], ["End Station Longitude", "geo"], ["F1", "hash"], ["Start Station Id", "hash"], ["Start Station Latitude", "geo"], ["Start Station Longitude", "geo"], ["Tripduration", "hash"], ["Number of Records", "eq", 1], ["Measure Values", "hash", 1]];
const legend = [["1 Ave & E 16 St", 6], ["1 Ave & E 68 St", 6], ["6 Ave & W 33 St", 6], ["8 Ave & W 31 St", 6], ["8 Ave & W 33 St", 7], ["9 Ave & W 22 St", 7], ["9 Ave & W 45 St", 7], ["11 Ave & W 27 St", 8], ["12 Ave & W 40 St", 8], ["Barrow St & Huds..", 8], ["Broadway & E 14 ..", 8], ["Broadway & E 22 ..", 9], ["Broadway & W 25..", 9], ["Broadway & W 29..", 9], ["Broadway & W 41..", 10], ["Broadway & W 49..", 10], ["Broadway & W 58..", 10], ["Broadway & W 60..", 10], ["Carmine St & 6 Ave", 11], ["Central Park S & 6..", 11], ["Centre St & Cham..", 11], ["Christopher St & ..", 12], ["Cleveland Pl & Sp..", 12], ["Columbus Ave & ..", 12]];
const icons = { abc: ["Abc", 20], cal: [<Calendar />, 18], hash: [<Hash />, 26], eq: [<Hash eq />, 26], geo: [<Globe />, 25] };

const FieldRow = ({ name, kind, it, alert }) => (
  <Field $it={it}><FieldIcon $pr={icons[kind][1]}>{icons[kind][0]}</FieldIcon>{name}{alert && <Alert />}</Field>
);

export default function App() {
  return (
    <Window>
      <Global />
      <TitleBar>
        <TitleIcon><Logo size={26} mono /></TitleIcon>Tableau Public - Book2
        <WindowButtons>
          <Svg w={20} h={20} s="#000"><path d="M0 10H20" /></Svg>
          <Svg w={20} h={20} s="#000"><rect x="1" y="1" width="18" height="18" /></Svg>
          <Svg w={20} h={20} s="#000"><path d="M0 0L20 20M20 0L0 20" strokeWidth="1.800" /></Svg>
        </WindowButtons>
      </TitleBar>
      <MenuBar>{menus.map(([m, w]) => <MenuItem key={m} $w={w}>{m}</MenuItem>)}</MenuBar>

      <Toolbar>
        <Tool $w={34} $ml={28}><Logo /></Tool>
        <ToolRule $ml={29} />
        <Tool $w={34} $ml={27}><Svg w={34} h={32} sw={3.4}><path d="M34 16H2M17 1L2 16L17 31" /></Svg></Tool>
        <Tool $w={34} $ml={30}><Svg w={34} h={32} sw={3} s="#b4b4b4"><path d="M0 16H32M17 1L32 16L17 31" /></Svg></Tool>
        <Tool $w={32} $ml={31}><Svg w={32} h={32}><rect x="1" y="1" width="30" height="30" rx="1" /><path d="M7 31V22H21V31" /><rect x="10" y="25" width="4" height="6" fill={ink} stroke="none" /></Svg></Tool>
        <Tool $w={28} $ml={34}><Svg w={28} h={34}><ellipse cx="11" cy="7" rx="10" ry="6" /><path d="M1 7V27C1 30 5 32 12 32.500M21 7V18" /><path d="M21 20V34M14 27H28" stroke="#333" strokeWidth="4" /></Svg></Tool>
        <ToolRule $ml={32} />
        <Tool $w={38} $ml={20}><Sheet mark="plus" /></Tool>
        <Tool $w={12} $ml={16}><Caret w={11} h={7} /></Tool>
        <Tool $w={36} $ml={20}><Svg w={36} h={34}><path d="M6 13H1V33H26V26" /><rect x="10" y="1" width="25" height="22" rx="1" /><path d="M16 18V12M22.500 18V6M29 18V9" /><path d="M7 29V24M12 29V26M16.500 29V26M21 29V26" /></Svg></Tool>
        <Tool $w={38} $ml={23}><Sheet mark="x" /></Tool>
        <Tool $w={12} $ml={15}><Caret w={11} h={7} /></Tool>
        <ToolRule $ml={19} />
        <Tool $w={36} $ml={27}><Svg w={36} h={36}><rect x="1" y="2" width="7" height="7" rx="1" /><rect x="12.500" y="2" width="7" height="7" rx="1" /><rect x="24" y="2" width="7" height="7" rx="1" /><rect x="1" y="13" width="7" height="7" rx="1" /><rect x="1" y="24" width="7" height="7" rx="1" /><path d="M31 17C31 25 25 30 17 31" /><path d="M26.500 20L31 13L35 20ZM20 26L13 31L20 36Z" fill={ink} stroke="none" /></Svg></Tool>
        <Tool $w={36} $ml={28}><SortIcon /></Tool>
        <Tool $w={36} $ml={28}><SortIcon desc /></Tool>
        <ToolRule $ml={28} />
        <Tool $w={24} $ml={33}><Svg w={24} h={34}><path d="M13 2Q15 -1 18 2L19 4L10 22L5 24L4 20Z" /><path d="M5 24L1 29" strokeWidth="4" strokeDasharray="2 1" /><path d="M0 32H22" strokeWidth="3.400" /></Svg></Tool>
        <Tool $w={12} $ml={16}><Caret w={11} h={7} /></Tool>
        <Tool $w={26} $ml={24}><Svg w={26} h={32} s="#b4b4b4"><path d="M22 12L14 27C9 35 -1 30 2 22L11 5C16 -3 27 2 23 11L15 25C12 29 7 27 9 22L16 9" strokeWidth="1.800" /></Svg></Tool>
        <Tool $w={12} $ml={18}><Caret c="#b4b4b4" w={11} h={7} /></Tool>
        <Tool $w={60} $ml={9} $on><Svg w={34} h={30} s="#333"><rect x="1" y="1" width="32" height="27" rx="1" /><path d="M11 10V7H23V10M17 7V22M14 22H20" strokeWidth="1.800" /></Svg></Tool>
        <Tool $w={60} $ml={4} $on><Svg w={32} h={34} s="#333"><path d="M10 1L24 9L20 11L15 20L17 26L1 18L6 16L12 7ZM9 22L4 31" strokeWidth="2" /><path d="M21 21L32 33M32 21L21 33" stroke="#000" strokeWidth="4" /></Svg></Tool>
        <FitBox><Caret c="#ccc" w={14} h={9} /></FitBox>
        <ToolRule $ml={30} />
        <Tool $w={39} $ml={24}><Svg w={39} h={30}><rect x="1" y="2" width="8" height="6" rx="1" /><rect x="1" y="12" width="8" height="6" rx="1" /><rect x="1" y="22" width="8" height="6" rx="1" /><rect x="13" y="2" width="25" height="26" rx="1" /><path d="M19.500 24V17M26 24V7M32 24V11" strokeWidth="2.600" /></Svg></Tool>
        <Tool $w={12} $ml={10}><Caret w={11} h={7} /></Tool>
        <Tool $w={34} $ml={22}><Svg w={34} h={32}><path d="M0 4H34" strokeWidth="4" /><path d="M4 5V22H30V5M17 0V4M17 22V30M10 31H24" /></Svg></Tool>
        <ToolRule $ml={29} />
        <ShowMe>
          <Svg w={32} h={30} s="none"><rect width="25" height="6" fill="#8a7299" /><rect y="8" width="32" height="6" fill="#85a5cb" /><rect y="16" width="13" height="6" fill="#f2a77d" /><rect y="24" width="19" height="6" fill="#f97583" /></Svg>
          Show Me
        </ShowMe>
      </Toolbar>

      <Body>
        <Side>
          <SideTabs>
            <SideTab $on>Data</SideTab>
            <SideTab>Analytics<Svg w={11} h={14} s="none"><path d="M0 6H11L5.500 0ZM0 8H11L5.500 14Z" fill="#66727d" /></Svg></SideTab>
          </SideTabs>
          <Sources>
            <Source $on><Svg w={30} h={32}><ellipse cx="13" cy="6" rx="10" ry="5" /><path d="M3 6V25C3 28 7 29 12 29.500M23 6V14" /><circle cx="22" cy="23" r="7.300" fill="#3a7d9e" stroke="none" /><path d="M18.500 23L21 26L25.500 20" stroke="#fff" /></Svg>clean_data_2018</Source>
            <Source><Svg w={30} h={30}><path d="M5 24Q-1 23 0 19V5Q0 0 9 0Q15 0 16 4M0 6Q4 10 9 9" /><ellipse cx="21" cy="8" rx="8.500" ry="4.500" /><path d="M12.500 8V12M12.500 22V25Q14 29 21 29Q29 28 29.500 25V8M5 13V19H17M13 15L17.500 19L13 23" /></Svg>clean_quarterly_data...</Source>
          </Sources>
          <Section $h={457}>
            <SectionHead $h={53}>Dimensions
              <HeadTools>
                <Svg w={24} h={18} sw={2.4}><path d="M0 1.200H24M0 5.200H24M0 9.200H24M0 13.200H24M0 17H24" strokeDasharray="4.800 1.600" /></Svg>
                <Svg w={19} h={19}><circle cx="12" cy="7" r="6" /><path d="M8 11L1 18" strokeWidth="2.600" /></Svg>
                <HeadRule />
                <Caret w={15} h={9} />
              </HeadTools>
            </SectionHead>
            {dimensions.map(([n, k, it]) => <FieldRow key={n} name={n} kind={k} it={it} />)}
          </Section>
          <Section $h={700}>
            <SectionHead $h={48} $pb={3}>Measures</SectionHead>
            {measures.map(([n, k, it]) => <FieldRow key={n} name={n} kind={k} it={it} alert={n === "Age"} />)}
          </Section>
        </Side>

        <Cards>
          <Card $h={124}><CardTitle>Pages</CardTitle></Card>
          <Card $h={156}>
            <CardTitle>Filters</CardTitle>
            <FilterSlot><Pill $w={288} $c="#009966">CNT(Start Station Id)</Pill></FilterSlot>
          </Card>
          <Card $h={504}>
            <CardTitle>Marks</CardTitle>
            <MarkType><Svg w={22} h={22}><circle cx="11" cy="11" r="9.500" /></Svg>Automatic<MarkCaret><Caret w={13} h={8} /></MarkCaret></MarkType>
            <MarkGrid>
              <MarkButton $pr={3}><MarkGlyph><Four /></MarkGlyph>Color</MarkButton>
              <MarkButton><MarkGlyph><SizeIcon /></MarkGlyph>Size</MarkButton>
              <MarkButton $pr={3}><MarkGlyph><BoxT /></MarkGlyph>Label</MarkButton>
              <MarkButton $pr={3}><MarkGlyph><Svg w={32} h={24}><circle cx="16" cy="5" r="4.500" fill={ink} stroke="none" /><circle cx="5" cy="18" r="4" /><circle cx="16" cy="18" r="4" /><circle cx="27" cy="18" r="4" /></Svg></MarkGlyph>Detail</MarkButton>
              <MarkButton><MarkGlyph><Svg w={28} h={26}><path d="M3 1H25Q27 1 27 3V18H21V24L15 18H1V3Q1 1 3 1Z" /></Svg></MarkGlyph>Tooltip</MarkButton>
            </MarkGrid>
            <MarkRows>
              <MarkRow><span><Four /></span><Pill $w={222} $c="#00b180">CNT(Start Sta..</Pill></MarkRow>
              <MarkRow><span><SizeIcon /></span><Pill $w={222} $c="#4996b2">Start Station ..</Pill></MarkRow>
              <MarkRow><span><BoxT /></span><Pill $w={222} $c="#4996b2">Start Station ..</Pill></MarkRow>
            </MarkRows>
          </Card>
        </Cards>

        <Right>
          <Shelf>
            <ShelfName $pl={14} $gap={15}><Svg w={21} h={24} sw={5}><path d="M2.500 0V4M10.500 0V4M18.500 0V4M2.500 6V24M10.500 6V24M18.500 6V24" /></Svg>Columns</ShelfName>
            <Pill $w={296} $c="#00b180">AVG(Start Station Lo..</Pill>
          </Shelf>
          <Shelf>
            <ShelfName $pl={12} $gap={14}><Svg w={24} h={20} sw={4}><path d="M0 2H4M0 10H4M0 18H4M6 2H24M6 10H24M6 18H24" /></Svg>Rows</ShelfName>
            <Pill $w={296} $c="#00b180">AVG(Start Station La..</Pill>
          </Shelf>
          <Stage>
            <View>
              <SheetTitle>Sheet 23</SheetTitle>
              <MapCanvas>
                <svg width="1469" height="1061" viewBox="727 404 1469 1061">
                  <defs><filter id="soft"><feGaussianBlur stdDeviation="8" /></filter></defs>
                  {tiles.map(([id, x, y, w, h]) => <Tile key={id} id={id} x={x} y={y} w={w} h={h} />)}
                  <rect x="728" y="405" width="1467" height="1059" fill="none" stroke="#e4e4e4" strokeWidth="2" />
                  {stations.map(([x, y, r], i) => <circle key={i} cx={x} cy={y} r={r + 3.5} fill="#f0f0f0" />)}
                  {stations.map(([x, y, r, c], i) => <circle key={i} cx={x} cy={y} r={r} fill={c} />)}
                </svg>
                {mapLabels.map(([t, x, y, w]) => <MapLabel key={t} $x={x} $y={y} $w={w}>{t}</MapLabel>)}
                <Credit>© 2019 Mapbox © OpenStreetMap</Credit>
              </MapCanvas>
            </View>
            <Legends>
              <Legend $h={1008}>
                <LegendHead>Start Station Name</LegendHead>
                <LegendBody>
                  <LegendList>{legend.map(([n, r]) => <LegendRow key={n}><Dot $r={r} />{n}</LegendRow>)}</LegendList>
                  <Scroll>
                    <Svg w={12} h={34} s="#555" sw={2.6}><path d="M1 22L6 16L11 22" /></Svg>
                    <Thumb />
                    <Svg w={12} h={34} s="#555" sw={2.6}><path d="M1 14L6 20L11 14" /></Svg>
                  </Scroll>
                </LegendBody>
              </Legend>
              <Legend $h={142}>
                <LegendHead>CNT(Start Station Id)</LegendHead>
                <Ramp />
                <RampEnds><span>48,949</span><span>123,022</span></RampEnds>
              </Legend>
            </Legends>
          </Stage>
        </Right>
      </Body>

      <SheetTabs>
        <SheetTab $w={259} $pl={16} $gap={11}><Svg w={18} h={22}><ellipse cx="9" cy="4.500" rx="7.500" ry="3.500" /><path d="M1.500 4.500V18Q3 21 9 21Q15 21 16.500 18V4.500" /></Svg>Data Source</SheetTab>
        <SheetTab $w={47} $end>ng</SheetTab>
        <SheetTab $w={188}>Top 3: Ending</SheetTab>
        <SheetTab $w={244}>Bottom 10: Ending</SheetTab>
        <SheetTab $w={232}>Bottom 3: Ending</SheetTab>
        <SheetTab $w={252} $pl={11}>Gender Distribution</SheetTab>
        <SheetTab $w={156} $pl={11}>Fem Riders</SheetTab>
        <SheetTab $w={400}>Average Trip Duration By Gender</SheetTab>
        <SheetTab $w={128} $pl={11}>Sheet 22</SheetTab>
        <SheetTab $w={129} $on $pl={12}>Sheet 23</SheetTab>
        <SheetTab $w={145} $pl={15} $gap={9}><GridIcon />Growth</SheetTab>
        <SheetTab $w={170} $pl={16} $gap={9} $ls={0.6}><GridIcon />Rider Subs</SheetTab>
        <SheetTab $w={63} $mid><Svg w={29} h={29}><path d="M12 21H1V2H22V12M6 16V14M11 16V6M16 16V10" /><path d="M22 15V28M15.500 21.500H29" strokeWidth="4" /></Svg></SheetTab>
        <SheetTab $w={64} $mid><Svg w={29} h={29}><path d="M15 20H1V2H21V12M1 10H21M11 2V20" /><path d="M22 15V28M15.500 21.500H29" strokeWidth="4" /></Svg></SheetTab>
        <SheetTab $w={64} $mid><Svg w={29} h={29}><path d="M11 5V22L1 19V2L11 5L21 2V13M11 22L15 21" /><path d="M22 15V28M15.500 21.500H29" strokeWidth="4" /></Svg></SheetTab>
      </SheetTabs>
      <Status>
        <StatusCell $w={128} $pl={3}>57 marks</StatusCell>
        <StatusCell $w={214} $pl={2}>1 row by 1 column</StatusCell>
        <StatusCell $w={1467} $rule $ls={0.6}>SUM of AVG(Start Station Longitude): -4,217.61530</StatusCell>
        <StatusCell $w={254} $rule $pl={12} $gap={19} $pr={15}>
          <Svg w={21} h={27}><circle cx="10.500" cy="6" r="5" /><path d="M1 26V22Q1 15 7 15H14Q20 15 20 22V26Z" /></Svg>Kayti<Push><Caret c="#000" w={14} h={8} /></Push>
        </StatusCell>
        <StatusCell $w={54} $rule />
        <StatusCell $w={54} $rule />
        <StatusCell $w={94} $rule />
        <StatusCell $w={142} $rule $pl={16}>
          <Svg w={110} h={14} s="none"><path d="M0 0H2V14H0ZM12 0V14L4 7ZM42 0V14L34 7ZM66 0V14L74 7ZM96 0V14L104 7ZM106 0H108V14H106Z" fill="#555" /></Svg>
        </StatusCell>
        <StatusCell $w={132} $pl={17} $gap={20}>
          <Svg w={22} h={22} s="none"><path d="M0 0H6V6H0ZM8 0H14V6H8ZM16 0H22V6H16ZM0 8H6V14H0ZM8 8H14V14H8ZM16 8H22V14H16ZM0 16H6V22H0ZM8 16H14V22H8ZM16 16H22V22H16Z" fill="#bbb" /></Svg>
          <Svg w={22} h={22} s="none"><path d="M0 0H22V14H0ZM0 16H6V22H0ZM8 16H14V22H8ZM16 16H22V22H16Z" fill="#bbb" /></Svg>
          <Svg w={22} h={22} s="none"><path d="M0 0H22V22H0Z" fill="#666" /></Svg>
        </StatusCell>
      </Status>
    </Window>
  );
}
